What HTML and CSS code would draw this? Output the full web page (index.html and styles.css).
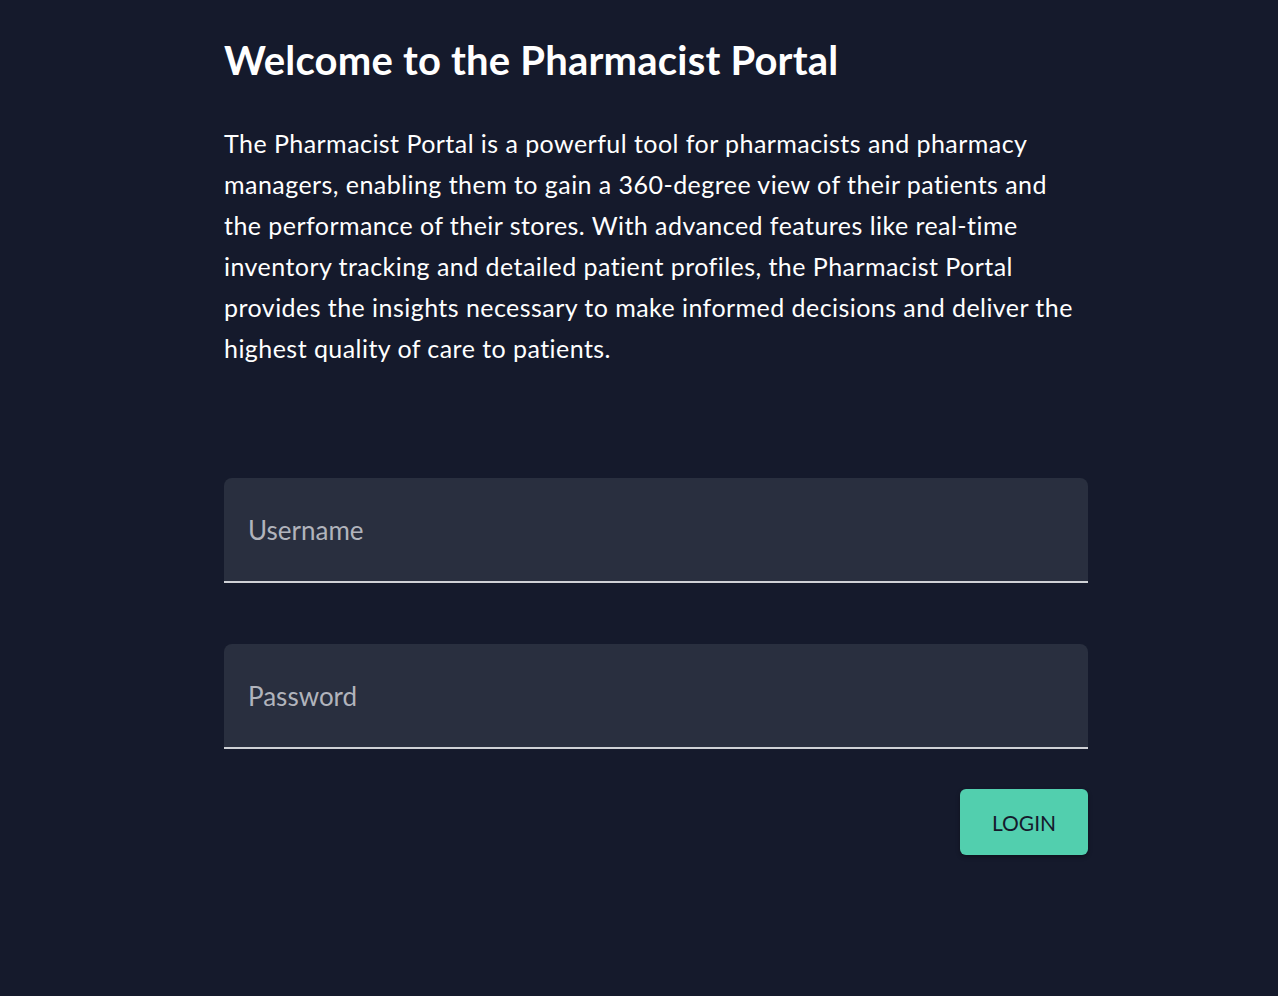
FILE: index.html
```html
<!DOCTYPE html>
<html lang="en">
<head>
<meta charset="utf-8">
<title>Pharmacist Portal</title>
<link rel="stylesheet" href="styles.css">
</head>
<body>
<main class="page">
  <h1 class="title">Welcome to the Pharmacist Portal</h1>
  <p class="intro">The Pharmacist Portal is a powerful tool for pharmacists and pharmacy managers, enabling them to gain a 360-degree view of their patients and the performance of their stores. With advanced features like real-time inventory tracking and detailed patient profiles, the Pharmacist Portal provides the insights necessary to make informed decisions and deliver the highest quality of care to patients.</p>
  <form class="login">
    <label class="field"><input class="input" type="text" placeholder="Username"></label>
    <label class="field"><input class="input" type="password" placeholder="Password"></label>
    <div class="actions"><button class="btn" type="button">LOGIN</button></div>
  </form>
</main>
</body>
</html>
```
FILE: styles.css
```css
html, body {
  margin: 0;
  padding: 0;
  background: #151a2c;
  height: 100%;
}
body {
  font-family: "Lato", "Noto Sans", sans-serif;
  color: #ffffff;
}
.page {
  width: 864px;
  margin-left: 224px;
  padding-top: 36px;
}
.title {
  margin: 0;
  font-size: 40px;
  font-weight: 700;
  line-height: 48px;
  letter-spacing: 0.2px;
}
.intro {
  margin: 39px 0 0;
  font-size: 25px;
  line-height: 41px;
  font-weight: 400;
  letter-spacing: 0.45px;
}
.login {
  margin-top: 109px;
  display: flex;
  flex-direction: column;
}
.field {
  display: block;
  margin-bottom: 61px;
}
.field:nth-of-type(2) { margin-bottom: 40px; }
.input {
  box-sizing: border-box;
  width: 100%;
  height: 105px;
  border: none;
  border-bottom: 2px solid #cfd1d6;
  border-radius: 8px 8px 0 0;
  background: #292f3f;
  padding: 0 24px;
  font-family: inherit;
  font-size: 26px;
  color: #ffffff;
  outline: none;
}
.input::placeholder { color: #b1b4bc; }
.actions {
  display: flex;
  justify-content: flex-end;
}
.btn {
  width: 128px;
  height: 66px;
  border: none;
  border-radius: 6px;
  background: #52cfae;
  color: #151a2c;
  font-family: inherit;
  font-size: 21px;
  box-shadow: 0 2px 4px rgba(0,0,0,0.35);
}
```
